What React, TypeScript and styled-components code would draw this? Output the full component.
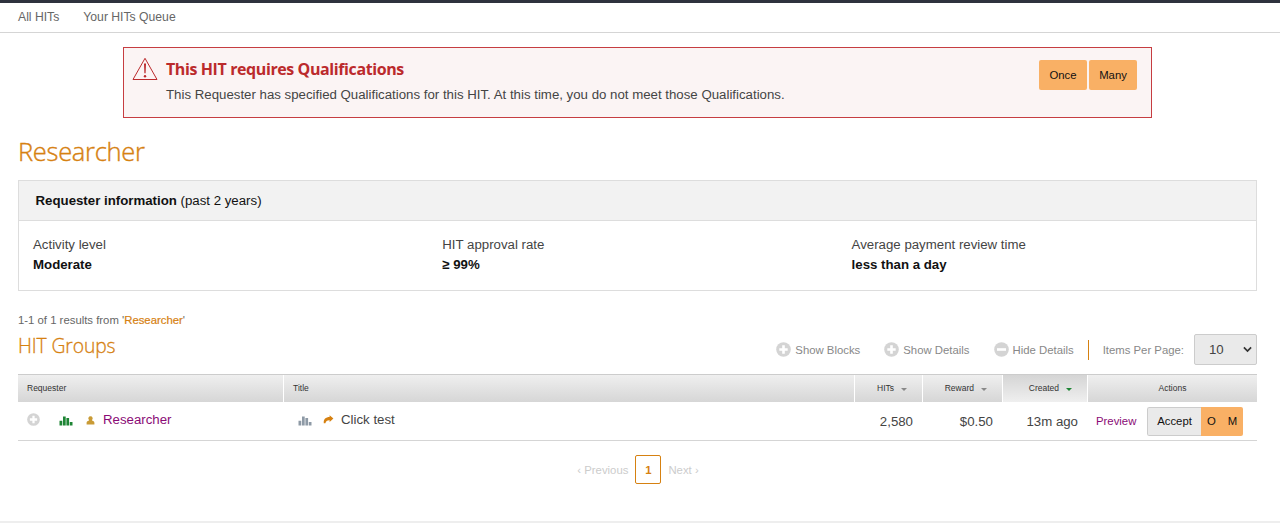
import React from 'react'
import styled, { createGlobalStyle } from 'styled-components'

const COLORS = {
	orange: '#d68111',
	button: '#f9b065',
	red: '#bb2a2c',
	visited: '#8a0a76',
	green: '#1e8535'
}

const STATS = [
	{ label: 'Activity level', value: 'Moderate' },
	{ label: 'HIT approval rate', value: '≥ 99%' },
	{ label: 'Average payment review time', value: 'less than a day' }
]

const ToggleIcon = ({ minus, size = 15 }: { minus?: boolean; size?: number }) => (
	<svg width={size} height={size} viewBox="0 0 15 15">
		<circle cx="7.5" cy="7.5" r="7.3" fill="#d4d4d4" />
		<path d={minus ? 'M3 7.5h9' : 'M3.3 7.5h8.4M7.5 3.3v8.4'} stroke="#fff" strokeWidth="2.6" />
	</svg>
)

const ChartIcon = ({ color }: { color: string }) => (
	<svg width="14" height="10" viewBox="0 0 14 10">
		<path
			d="M0.5 4.8h2.8v4.6H0.5zM4 0.6h2.7v8.8H4zM7.4 2h2.7v7.4H7.4zM10.8 5.9h2.7v3.5h-2.7z"
			fill={color}
		/>
	</svg>
)

const App = () => (
	<>
		<GlobalStyle />
		<Nav>
			<NavLink>All HITs</NavLink>
			<NavLink>Your HITs Queue</NavLink>
		</Nav>
		<Alert>
			<WarningIcon width="26" height="24" viewBox="0 0 26 24">
				<path d="M13 1.3L25 22.5H1z" fill="none" stroke={COLORS.red} strokeWidth="1" />
				<path d="M12 6.6h2l-.4 9.6h-1.2z" fill={COLORS.red} />
				<circle cx="13" cy="19.3" r="1.2" fill={COLORS.red} />
			</WarningIcon>
			<AlertBody>
				<AlertTitle>This HIT requires Qualifications</AlertTitle>
				<AlertCopy>
					This Requester has specified Qualifications for this HIT. At this time, you do not meet
					those Qualifications.
				</AlertCopy>
			</AlertBody>
			<AlertActions>
				<OrangeButton>Once</OrangeButton>
				<OrangeButton>Many</OrangeButton>
			</AlertActions>
		</Alert>

		<Content>
			<PageTitle>Researcher</PageTitle>
			<Panel>
				<PanelHeader>
					<b>Requester information</b> (past 2 years)
				</PanelHeader>
				<PanelBody>
					{STATS.map(({ label, value }) => (
						<Stat key={label}>
							<span>{label}</span>
							<StatValue>{value}</StatValue>
						</Stat>
					))}
				</PanelBody>
			</Panel>

			<Results>
				1-1 of 1 results from '<ResultsName>Researcher</ResultsName>'
			</Results>
			<Toolbar>
				<GroupsTitle>HIT Groups</GroupsTitle>
				<Toggle $gap="24px">
					<ToggleIcon />
					Show Blocks
				</Toggle>
				<Toggle $gap="24px">
					<ToggleIcon />
					Show Details
				</Toggle>
				<Toggle $gap="14px">
					<ToggleIcon minus />
					Hide Details
				</Toggle>
				<ItemsLabel>Items Per Page:</ItemsLabel>
				<PageSize>
					10
					<svg width="9" height="7" viewBox="0 0 9 7">
						<path d="M0.9 1.3l3.6 3.7 3.6-3.7" fill="none" stroke="#333" strokeWidth="1.7" />
					</svg>
				</PageSize>
			</Toolbar>

			<TableHead>
				<HeadCell>Requester</HeadCell>
				<HeadCell>Title</HeadCell>
				<SortCell>
					HITs <Caret />
				</SortCell>
				<SortCell>
					Reward <Caret />
				</SortCell>
				<SortCell $sorted>
					Created <Caret $color={COLORS.green} />
				</SortCell>
				<ActionsHead>Actions</ActionsHead>
			</TableHead>
			<TableRow>
				<RequesterCell>
					<ToggleIcon size={13} />
					<ChartIcon color={COLORS.green} />
					<svg width="9" height="9" viewBox="0 0 9 9">
						<path
							d="M4.5 .2a2.2 2.2 0 0 1 1.4 3.9C5.9 4.6 6.3 4.7 7 5C8 5.4 8.4 6.1 8.4 7v1.5H.6V7c0-.9.4-1.6 1.4-2c.7-.3 1.1-.4 1.1-.9A2.2 2.2 0 0 1 4.5 .2z"
							fill="#c99b36"
						/>
					</svg>
					<RequesterLink>Researcher</RequesterLink>
				</RequesterCell>
				<TitleCell>
					<ChartIcon color="#8e9aa6" />
					<svg width="11" height="9" viewBox="0 0 11 9">
						<path
							d="M6.6 0.3L10.4 3.6 6.6 6.9V5.2C4.2 5.1 2.9 5.9 2.4 8.3H.8C.3 4.3 2.8 2.1 6.6 2.1z"
							fill={COLORS.orange}
						/>
					</svg>
					Click test
				</TitleCell>
				<NumberCell>2,580</NumberCell>
				<NumberCell>$0.50</NumberCell>
				<NumberCell>13m ago</NumberCell>
				<ActionsCell>
					<Preview>Preview</Preview>
					<ButtonGroup>
						<Accept>Accept</Accept>
						<GroupButton>O</GroupButton>
						<GroupButton>M</GroupButton>
					</ButtonGroup>
				</ActionsCell>
			</TableRow>

			<Pagination>
				<span>‹ Previous</span>
				<CurrentPage>1</CurrentPage>
				<span>Next ›</span>
			</Pagination>
		</Content>
		<Footer />
	</>
)

const GlobalStyle = createGlobalStyle`
	* {
		box-sizing: border-box;
	}

	body {
		margin: 0;
		background: #ffffff;
		color: #444444;
		font-family: 'Liberation Sans', Arial, sans-serif;
		font-size: 13.25px;
		line-height: 20px;
		overflow: hidden;
	}

	svg {
		display: block;
		flex: none;
	}
`

const Nav = styled.nav`
	display: flex;
	gap: 24px;
	height: 33px;
	padding: 4px 18px 0;
	border-top: 3px solid #2f323e;
	border-bottom: 1px solid #d5d5d5;
`

const NavLink = styled.a`
	font-size: 12.2px;
	color: #666666;
`

const Alert = styled.section`
	display: flex;
	width: 1029px;
	height: 71px;
	margin: 14px 0 0 123px;
	padding: 0 14px 0 8px;
	border: 1px solid #c63d41;
	background: #fbf4f4;
`

const WarningIcon = styled.svg`
	margin: 9px 8px 0 0;
`

const AlertBody = styled.div`
	flex: 1;
	padding-top: 11px;
`

const AlertTitle = styled.h4`
	margin: 0 0 6px;
	color: ${COLORS.red};
	font-family: 'Open Sans', sans-serif;
	font-size: 16px;
	font-weight: 700;
	letter-spacing: -0.4px;
	line-height: 20px;
`

const AlertCopy = styled.p`
	margin: 0;
`

const AlertActions = styled.div`
	display: flex;
	gap: 2px;
	padding-top: 12px;
`

const OrangeButton = styled.button`
	width: 48px;
	height: 30px;
	padding: 0 0 1px;
	border: none;
	border-radius: 2px;
	background: ${COLORS.button};
	color: #111111;
	font-family: inherit;
	font-size: 11.35px;
`

const Content = styled.main`
	padding: 0 23px 0 18px;
`

const PageTitle = styled.h1`
	margin: 16px 0 12px;
	color: ${COLORS.orange};
	font-family: 'Open Sans', sans-serif;
	font-size: 25.5px;
	font-weight: 300;
	letter-spacing: -0.3px;
	line-height: 34px;
	-webkit-text-stroke: 0.4px ${COLORS.orange};
`

const Panel = styled.section`
	height: 111px;
	border: 1px solid #dddddd;
`

const PanelHeader = styled.header`
	height: 40px;
	padding: 10px 16.5px;
	border-bottom: 1px solid #dddddd;
	background: #f2f2f2;
	color: #111111;
`

const PanelBody = styled.div`
	display: grid;
	grid-template-columns: repeat(3, 409.3px);
	padding: 14px;
`

const Stat = styled.div`
	display: flex;
	flex-direction: column;
`

const StatValue = styled.strong`
	color: #111111;
`

const Results = styled.div`
	margin-top: 19px;
	font-size: 11.35px;
	color: #666666;
`

const ResultsName = styled.span`
	color: ${COLORS.orange};
	-webkit-text-stroke: 0.2px ${COLORS.orange};
`

const Toolbar = styled.div`
	display: flex;
	align-items: center;
	height: 44px;
	padding-bottom: 5px;
	font-size: 11.35px;
	color: #888888;
`

const GroupsTitle = styled.h2`
	flex: 1;
	margin: 0 0 8px;
	color: ${COLORS.orange};
	font-family: 'Open Sans', sans-serif;
	font-size: 19.3px;
	font-weight: 300;
	letter-spacing: -0.1px;
	line-height: 26px;
	-webkit-text-stroke: 0.3px ${COLORS.orange};
`

const Toggle = styled.div<{ $gap: string }>`
	display: flex;
	align-items: center;
	gap: 4px;
	margin-right: ${({ $gap }) => $gap};
`

const ItemsLabel = styled.label`
	padding: 0 10px 0 14px;
	border-left: 1px solid ${COLORS.orange};
`

const PageSize = styled.div`
	display: flex;
	align-items: center;
	justify-content: space-between;
	width: 63px;
	height: 31px;
	padding: 0 4px 0 14px;
	border: 1px solid #cccccc;
	border-radius: 2px;
	background: #eaeaea;
	color: #444444;
	font-size: 13.25px;
`

const TableHead = styled.div`
	display: grid;
	grid-template-columns: 265px 571px 68px 80px 85px 170px;
	height: 28px;
	border-top: 1px solid #cccccc;
`

const HeadCell = styled.div`
	display: flex;
	align-items: center;
	padding: 0 9px 2px;
	background: linear-gradient(#efefef, #d6d6d6);
	color: #333333;
	font-size: 8.5px;

	&:not(:first-child) {
		border-left: 1px solid #ffffff;
	}
`

const SortCell = styled(HeadCell)<{ $sorted?: boolean }>`
	justify-content: flex-end;
	gap: 7px;
	padding-right: 15px;
	${({ $sorted }) => $sorted && 'background: linear-gradient(#d5d5d5, #efefef);'}
`

const ActionsHead = styled(HeadCell)`
	justify-content: center;
`

const Caret = styled.i<{ $color?: string }>`
	margin-top: 3px;
	border: 3px solid transparent;
	border-top-color: ${({ $color }) => $color || '#888888'};
	border-bottom: none;
`

const TableRow = styled.div`
	display: grid;
	grid-template-columns: 265px 571px 68px 80px 85px 170px;
	height: 39px;
	border-bottom: 1px solid #d5d5d5;
`

const RequesterCell = styled.div`
	display: flex;
	padding: 8px 10px 0 9px;

	svg:nth-child(1) {
		margin: 3px 19px 0 0;
	}

	svg:nth-child(2) {
		margin: 6px 13px 0 0;
	}

	svg:nth-child(3) {
		margin: 6px 8px 0 0;
	}
`

const RequesterLink = styled.a`
	color: ${COLORS.visited};
`

const TitleCell = styled.div`
	display: flex;
	padding: 8px 0 0 15px;

	svg:nth-child(1) {
		margin: 6px 11px 0 0;
	}

	svg:nth-child(2) {
		margin: 5px 7px 0 0;
	}
`

const NumberCell = styled.div`
	padding: 10px 9px 0 0;
	text-align: right;
`

const ActionsCell = styled.div`
	display: flex;
	padding: 5px 0 0 9px;
`

const Preview = styled.a`
	width: 51px;
	padding-top: 4px;
	color: ${COLORS.visited};
	font-size: 11.35px;
`

const ButtonGroup = styled.div`
	display: flex;
	width: 96px;
	height: 29px;
	border-radius: 2px;
	overflow: hidden;
`

const Accept = styled.button`
	width: 54px;
	padding: 0 0 1px;
	border: 1px solid #cccccc;
	border-right: none;
	border-radius: 2px 0 0 2px;
	background: #eaeaea;
	color: #111111;
	font-family: inherit;
	font-size: 11.35px;
`

const GroupButton = styled(Accept)`
	width: 21px;
	border: none;
	border-radius: 0;
	background: ${COLORS.button};
`

const Pagination = styled.div`
	display: flex;
	align-items: center;
	justify-content: center;
	gap: 7px;
	margin-top: 14px;
	padding-left: 1px;
	color: #cccccc;
	font-size: 11.35px;
`

const CurrentPage = styled.span`
	width: 26px;
	height: 29px;
	border: 1px solid ${COLORS.orange};
	border-radius: 2px;
	color: ${COLORS.orange};
	font-weight: 700;
	line-height: 28px;
	text-align: center;
`

const Footer = styled.footer`
	height: 2px;
	margin-top: 37px;
	background: #eeeeee;
`

export default App
